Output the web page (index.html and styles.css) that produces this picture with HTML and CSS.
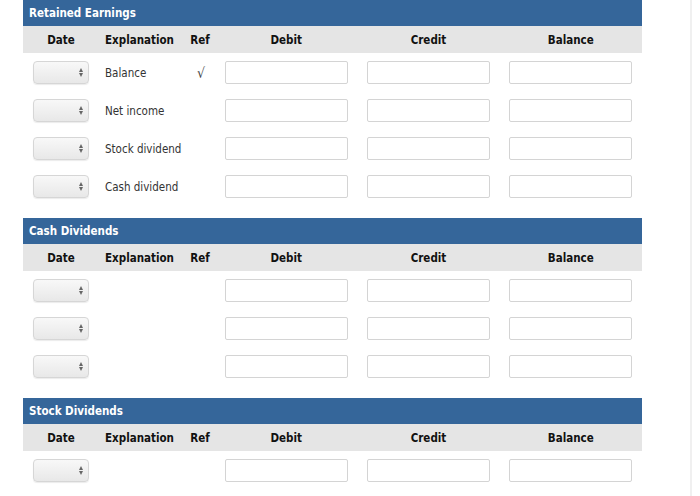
FILE: index.html
```html
<!DOCTYPE html>
<html>
<head>
<meta charset="utf-8">
<link rel="stylesheet" href="styles.css">
</head>
<body>
<div class="page">
  <section class="ledger">
    <div class="title">Retained Earnings</div>
    <div class="grid head">
      <div class="c-date">Date</div><div class="c-exp">Explanation</div><div class="c-ref">Ref</div><div class="c-num">Debit</div><div class="c-num">Credit</div><div class="c-num">Balance</div>
    </div>
    <div class="grid row">
      <div class="c-date"><span class="sel"><span class="arr"></span></span></div><div class="c-exp">Balance</div><div class="c-ref check">√</div><div class="c-num"><span class="inp"></span></div><div class="c-num"><span class="inp"></span></div><div class="c-num"><span class="inp"></span></div>
    </div>
    <div class="grid row">
      <div class="c-date"><span class="sel"><span class="arr"></span></span></div><div class="c-exp">Net income</div><div class="c-ref"></div><div class="c-num"><span class="inp"></span></div><div class="c-num"><span class="inp"></span></div><div class="c-num"><span class="inp"></span></div>
    </div>
    <div class="grid row">
      <div class="c-date"><span class="sel"><span class="arr"></span></span></div><div class="c-exp">Stock dividend</div><div class="c-ref"></div><div class="c-num"><span class="inp"></span></div><div class="c-num"><span class="inp"></span></div><div class="c-num"><span class="inp"></span></div>
    </div>
    <div class="grid row">
      <div class="c-date"><span class="sel"><span class="arr"></span></span></div><div class="c-exp">Cash dividend</div><div class="c-ref"></div><div class="c-num"><span class="inp"></span></div><div class="c-num"><span class="inp"></span></div><div class="c-num"><span class="inp"></span></div>
    </div>
  </section>

  <section class="ledger">
    <div class="title">Cash Dividends</div>
    <div class="grid head">
      <div class="c-date">Date</div><div class="c-exp">Explanation</div><div class="c-ref">Ref</div><div class="c-num">Debit</div><div class="c-num">Credit</div><div class="c-num">Balance</div>
    </div>
    <div class="grid row">
      <div class="c-date"><span class="sel"><span class="arr"></span></span></div><div class="c-exp"></div><div class="c-ref"></div><div class="c-num"><span class="inp"></span></div><div class="c-num"><span class="inp"></span></div><div class="c-num"><span class="inp"></span></div>
    </div>
    <div class="grid row">
      <div class="c-date"><span class="sel"><span class="arr"></span></span></div><div class="c-exp"></div><div class="c-ref"></div><div class="c-num"><span class="inp"></span></div><div class="c-num"><span class="inp"></span></div><div class="c-num"><span class="inp"></span></div>
    </div>
    <div class="grid row">
      <div class="c-date"><span class="sel"><span class="arr"></span></span></div><div class="c-exp"></div><div class="c-ref"></div><div class="c-num"><span class="inp"></span></div><div class="c-num"><span class="inp"></span></div><div class="c-num"><span class="inp"></span></div>
    </div>
  </section>

  <section class="ledger">
    <div class="title">Stock Dividends</div>
    <div class="grid head">
      <div class="c-date">Date</div><div class="c-exp">Explanation</div><div class="c-ref">Ref</div><div class="c-num">Debit</div><div class="c-num">Credit</div><div class="c-num">Balance</div>
    </div>
    <div class="grid row">
      <div class="c-date"><span class="sel"><span class="arr"></span></span></div><div class="c-exp"></div><div class="c-ref"></div><div class="c-num"><span class="inp"></span></div><div class="c-num"><span class="inp"></span></div><div class="c-num"><span class="inp"></span></div>
    </div>
  </section>
</div>
<div class="scrollline"></div>
</body>
</html>
```
FILE: styles.css
```css
html, body {
  margin: 0;
  padding: 0;
  background: #fff;
  overflow: hidden;
}
body {
  font-family: "DejaVu Sans Condensed", "DejaVu Sans", Verdana, sans-serif;
  font-size: 11.5px;
  color: #333;
}
.page {
  width: 619px;
  margin-left: 23px;
}
.ledger {
  margin-bottom: 13px;
}
.title {
  height: 26px;
  line-height: 27px;
  background: #35669a;
  color: #fff;
  font-weight: bold;
  padding-left: 6px;
  font-size: 11.5px;
}
.grid {
  display: grid;
  grid-template-columns: 76px 86px 30px 1fr 1fr 1fr;
  align-items: center;
}
.head {
  height: 27px;
  padding-top: 1px;
  box-sizing: border-box;
  background: #e5e5e5;
  font-weight: bold;
  color: #111;
}
.row {
  height: 38px;
  padding-top: 1px;
  box-sizing: border-box;
}
.c-date { display: flex; justify-content: center; }
.c-exp { padding-left: 6px; white-space: nowrap; }
.c-ref { text-align: center; }
.check { font-size: 14px; color: #444; padding-left: 2px; }
.c-num { text-align: center; display: flex; justify-content: center; }
.sel {
  position: relative;
  display: block;
  width: 56px;
  height: 23px;
  box-sizing: border-box;
  border: 1px solid #d6d6d6;
  border-radius: 4px;
  background: linear-gradient(#f8f8f8, #e8e8e8);
  box-shadow: 0 1px 1px rgba(0,0,0,0.08);
}
.arr {
  position: absolute;
  right: 5px;
  top: 6px;
  width: 0;
  height: 0;
  border-left: 2.5px solid transparent;
  border-right: 2.5px solid transparent;
  border-bottom: 4px solid #666;
}
.arr::after {
  content: "";
  position: absolute;
  left: -2.5px;
  top: 5px;
  border-left: 2.5px solid transparent;
  border-right: 2.5px solid transparent;
  border-top: 4px solid #666;
}
.inp {
  display: block;
  width: 123px;
  height: 23px;
  box-sizing: border-box;
  border: 1px solid #d4d4d4;
  border-radius: 2px;
  background: #fff;
}
.scrollline {
  position: fixed;
  top: 0;
  bottom: 0;
  left: 690px;
  width: 2px;
  background: #f0f0f0;
}
```
